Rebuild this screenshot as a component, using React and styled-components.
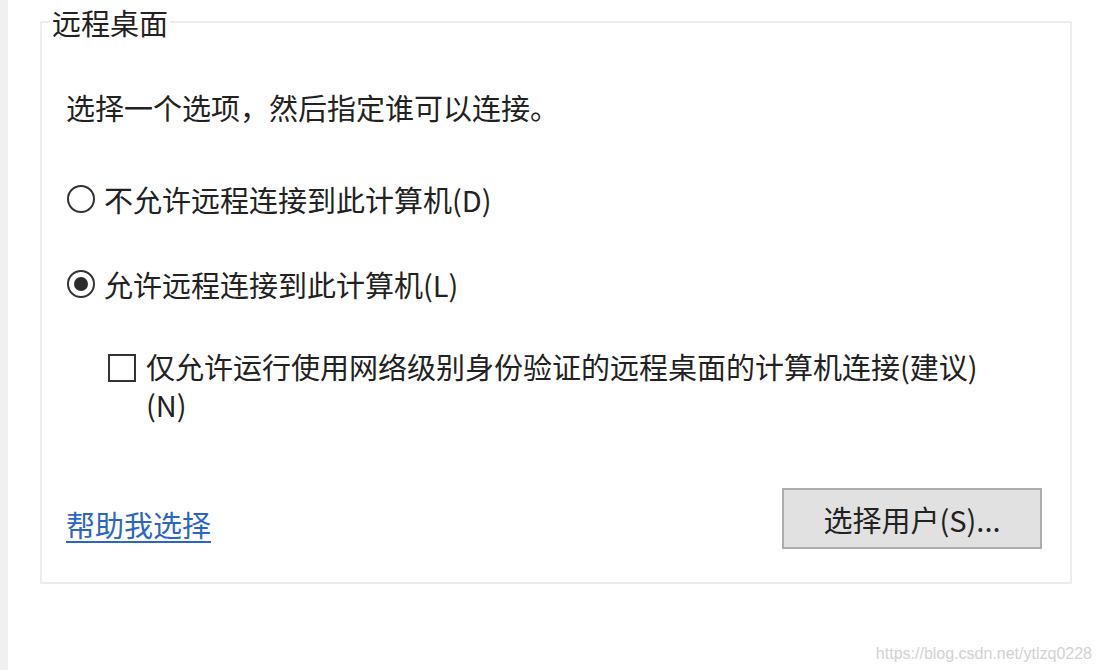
import React from 'react'
import styled, { createGlobalStyle } from 'styled-components'

const GlobalStyle = createGlobalStyle`
  html, body {
    margin: 0;
    padding: 0;
    background: #ffffff;
  }
  body {
    font-family: "Noto Sans", "Noto Sans CJK SC", sans-serif;
    color: #222222;
  }
`

const Page = styled.div`
  position: relative;
  display: flex;
  width: 1102px;
  height: 670px;
  overflow: hidden;
`

const SideStrip = styled.div`
  width: 8px;
  flex-shrink: 0;
  background: #f0f0f0;
`

const Content = styled.div`
  padding: 2px 0 0 32px;
`

const Group = styled.fieldset`
  box-sizing: border-box;
  width: 1032px;
  height: 582px;
  margin: 0;
  padding: 45px 28px 0 24px;
  border: 2px solid #ececec;
  display: flex;
  flex-direction: column;
`

const Legend = styled.legend`
  font-family: "Noto Sans CJK SC", sans-serif;
  font-size: 29px;
  line-height: 40px;
  margin-left: -16px;
  padding: 0 2px;
  color: #222;
`

const Intro = styled.p`
  margin: 0;
  font-family: "Noto Sans CJK SC", sans-serif;
  font-size: 29px;
  line-height: 40px;
`

const OptionRow = styled.label`
  display: flex;
  align-items: center;
  gap: 9px;
  margin-top: ${p => p.$gap}px;
  font-family: "Noto Sans CJK SC", sans-serif;
  font-size: 29px;
  line-height: 40px;
`

const Radio = styled.span`
  box-sizing: border-box;
  width: 28px;
  height: 28px;
  margin-left: 1px;
  border: 2px solid #333;
  border-radius: 50%;
  display: flex;
  align-items: center;
  justify-content: center;
  flex-shrink: 0;

  &::after {
    content: '';
    width: 14px;
    height: 14px;
    border-radius: 50%;
    background: ${p => (p.$checked ? '#2b2b2b' : 'transparent')};
  }
`

const CheckRow = styled.label`
  display: flex;
  align-items: flex-start;
  gap: 10px;
  margin-top: 43px;
  padding-left: 42px;
  font-family: "Noto Sans CJK SC", sans-serif;
  font-size: 29px;
  line-height: 38px;
`

const CheckBox = styled.span`
  box-sizing: border-box;
  width: 28px;
  height: 28px;
  margin-top: 7px;
  border: 2px solid #333;
  flex-shrink: 0;
`

const Footer = styled.div`
  display: flex;
  justify-content: space-between;
  align-items: center;
  margin-top: 65px;
`

const HelpLink = styled.a`
  font-family: "Noto Sans CJK SC", sans-serif;
  font-size: 29px;
  line-height: 40px;
  color: #2a66c4;
  text-decoration: underline;
  text-underline-offset: 4px;
  padding-top: 10px;
`

const Button = styled.button`
  box-sizing: border-box;
  width: 260px;
  height: 61px;
  background: #e1e1e1;
  border: 2px solid #adadad;
  font-family: "Noto Sans CJK SC", sans-serif;
  font-size: 29px;
  color: #222;
  padding: 0;
`

const Watermark = styled.div`
  position: absolute;
  right: 10px;
  bottom: 7px;
  font-family: "Liberation Sans", Arial, sans-serif;
  font-size: 16px;
  color: #d2d2d2;
`

export default function App() {
  return (
    <>
      <GlobalStyle />
      <Page>
        <SideStrip />
        <Content>
          <Group>
            <Legend>远程桌面</Legend>
            <Intro>选择一个选项，然后指定谁可以连接。</Intro>
            <OptionRow $gap={52}>
              <Radio />
              不允许远程连接到此计算机(D)
            </OptionRow>
            <OptionRow $gap={45}>
              <Radio $checked />
              允许远程连接到此计算机(L)
            </OptionRow>
            <CheckRow>
              <CheckBox />
              <span>
                仅允许运行使用网络级别身份验证的远程桌面的计算机连接(建议)
                <br />
                (N)
              </span>
            </CheckRow>
            <Footer>
              <HelpLink href="#">帮助我选择</HelpLink>
              <Button>选择用户(S)...</Button>
            </Footer>
          </Group>
        </Content>
        <Watermark>https://blog.csdn.net/ytlzq0228</Watermark>
      </Page>
    </>
  )
}
